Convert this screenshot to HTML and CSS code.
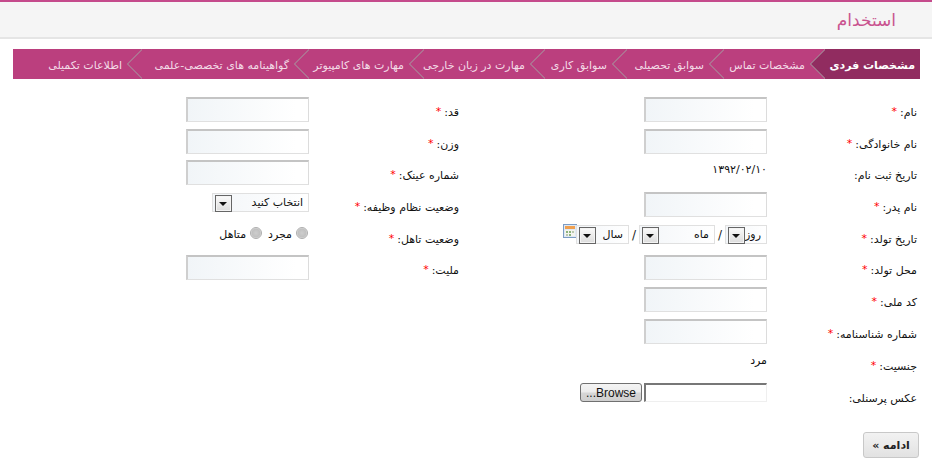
FILE: index.html
```html
<!DOCTYPE html>
<html lang="fa" dir="rtl">
<head>
<meta charset="utf-8">
<title>استخدام</title>
<link rel="stylesheet" href="styles.css">
</head>
<body>
<header class="top"><h1 class="title">استخدام</h1></header>
<nav class="tabs">
  <a class="tab active">مشخصات فردی<svg class="chev" viewBox="0 0 15 30"><path d="M15.5 0L.5 15L15.5 30"/></svg></a>
  <a class="tab">مشخصات تماس<svg class="chev" viewBox="0 0 15 30"><path d="M15.5 0L.5 15L15.5 30"/></svg></a>
  <a class="tab">سوابق تحصیلی<svg class="chev" viewBox="0 0 15 30"><path d="M15.5 0L.5 15L15.5 30"/></svg></a>
  <a class="tab">سوابق کاری<svg class="chev" viewBox="0 0 15 30"><path d="M15.5 0L.5 15L15.5 30"/></svg></a>
  <a class="tab">مهارت در زبان خارجی<svg class="chev" viewBox="0 0 15 30"><path d="M15.5 0L.5 15L15.5 30"/></svg></a>
  <a class="tab">مهارت های کامپیوتر<svg class="chev" viewBox="0 0 15 30"><path d="M15.5 0L.5 15L15.5 30"/></svg></a>
  <a class="tab">گواهینامه های تخصصی-علمی<svg class="chev" viewBox="0 0 15 30"><path d="M15.5 0L.5 15L15.5 30"/></svg></a>
  <a class="tab">اطلاعات تکمیلی</a>
</nav>
<form class="form">
  <label class="lbl">نام: <b>*</b></label>
  <div class="field"><input class="txt" type="text"></div>
  <label class="lbl">قد: <b>*</b></label>
  <div class="field"><input class="txt" type="text"></div>

  <label class="lbl">نام خانوادگی: <b>*</b></label>
  <div class="field"><input class="txt" type="text"></div>
  <label class="lbl">وزن: <b>*</b></label>
  <div class="field"><input class="txt" type="text"></div>

  <label class="lbl">تاریخ ثبت نام:</label>
  <div class="field value">۱۳۹۲/۰۲/۱۰</div>
  <label class="lbl">شماره عینک: <b>*</b></label>
  <div class="field"><input class="txt" type="text"></div>

  <label class="lbl">نام پدر: <b>*</b></label>
  <div class="field"><input class="txt" type="text"></div>
  <label class="lbl">وضعیت نظام وظیفه: <b>*</b></label>
  <div class="field"><span class="sel sel-wide"><select><option>انتخاب کنید</option></select></span></div>

  <label class="lbl">تاریخ تولد: <b>*</b></label>
  <div class="field date">
    <span class="sel sel-day"><select><option>روز</option></select></span><span class="slash">/</span>
    <span class="sel sel-month"><select><option>ماه</option></select></span><span class="slash">/</span>
    <span class="sel sel-year"><select><option>سال</option></select></span>
    <svg class="cal" viewBox="0 0 14 14"><rect x=".5" y=".5" width="13" height="13" fill="#dfe9f5" stroke="#7c9cc4"/><rect x="2" y="2" width="10" height="3" fill="#f0a050"/><rect x="2" y="6" width="10" height="6" fill="#f4f4ee"/><path d="M3 7h2v2H3zM6 7h2v2H6zM6 10h2v2H6z" fill="#8cb47c"/><path d="M9 7h2v2H9zM3 10h2v2H3z" fill="#b8c8b0"/></svg>
  </div>
  <label class="lbl">وضعیت تاهل: <b>*</b></label>
  <div class="field radios"><label class="radio"><input type="radio" name="m"><span>مجرد</span></label><label class="radio"><input type="radio" name="m"><span>متاهل</span></label></div>

  <label class="lbl">محل تولد: <b>*</b></label>
  <div class="field"><input class="txt" type="text"></div>
  <label class="lbl">ملیت: <b>*</b></label>
  <div class="field"><input class="txt" type="text"></div>

  <label class="lbl">کد ملی: <b>*</b></label>
  <div class="field wide"><input class="txt" type="text"></div>

  <label class="lbl">شماره شناسنامه: <b>*</b></label>
  <div class="field wide"><input class="txt" type="text"></div>

  <label class="lbl">جنسیت: <b>*</b></label>
  <div class="field wide value">مرد</div>

  <label class="lbl">عکس پرسنلی:</label>
  <div class="field wide file"><input class="path" type="text"><button class="browse" type="button">Browse...</button></div>
</form>
<div class="actions"><button class="next" type="button">ادامه »</button></div>
</body>
</html>
```
FILE: styles.css
```css
* { box-sizing: border-box; }
html, body { margin: 0; padding: 0; }
body {
  width: 932px;
  height: 468px;
  overflow: hidden;
  background: #fff;
  font-family: Tahoma, "DejaVu Sans", sans-serif;
  font-size: 11px;
  color: #111;
}
.top {
  height: 39px;
  background: #f5f5f5;
  border-top: 2px solid #c54b8c;
  border-bottom: 2px solid #e5e5e5;
  padding-right: 36px;
  display: flex;
  align-items: center;
}
.title {
  margin: 0;
  font-size: 17px;
  font-weight: normal;
  color: #c9538f;
}
.tabs {
  display: flex;
  height: 30px;
  margin: 10px 12px 0 13px;
  background: #bb3f7e;
  font-size: 11px;
}
.tab {
  position: relative;
  display: flex;
  flex: none;
  align-items: center;
  padding: 2px 20px 0 0;
  color: #f3dbe7;
  white-space: nowrap;
}
.tab:nth-child(1) { width: 95px; padding-right: 5px; }
.tab:nth-child(2) { width: 101px; }
.tab:nth-child(3) { width: 97px; }
.tab:nth-child(4) { width: 82px; }
.tab:nth-child(5) { width: 121px; }
.tab:nth-child(6) { width: 115px; }
.tab:nth-child(7) { width: 167px; }
.active {
  background: #912c60;
  color: #fff;
  font-weight: bold;
}
.chev {
  position: absolute;
  top: 0;
  left: -15px;
  width: 15px;
  height: 30px;
}
.chev path { fill: none; stroke: #a3a3a3; stroke-width: 1; }
.active .chev path { fill: #912c60; }
.form {
  display: grid;
  grid-template-columns: 150px 308px 150px 123px;
  grid-template-rows: 32px 31px 32px 32px 31px 32px 32px 32px 32px 32px;
  margin: 18px 15px 0 0;
}
.lbl {
  display: flex;
  align-items: center;
  gap: 3px;
  height: 25px;
  padding-top: 6px;
  white-space: nowrap;
}
.lbl b { color: #f00; font-weight: normal; font-size: 11px; margin-top: -3px; }
.field { display: flex; align-items: flex-start; }
.wide { grid-column: 2 / 5; }
.value { padding-top: 3px; }
.txt {
  width: 123px;
  height: 25px;
  margin: 0;
  border: 1px solid #e0e0e0;
  border-top: 2px solid #c4c4c4;
  border-right-color: #dcdcdc;
  border-left: 2px solid #cfcfcf;
  background: linear-gradient(to right, #f1f5f8, #fff 90%);
  outline: none;
}
.sel { position: relative; display: block; height: 19px; margin-top: 1px; }
.sel select {
  appearance: none;
  -webkit-appearance: none;
  display: block;
  width: 100%;
  height: 19px;
  margin: 0;
  padding: 0 5px 0 0;
  border: 1px solid #e0e0e0;
  border-radius: 0;
  background: linear-gradient(to right, #f3f6f9, #fff);
  font: inherit;
  color: #111;
}
.sel::after {
  content: "";
  position: absolute;
  top: 2px;
  left: 3px;
  width: 15px;
  height: 15px;
  border: 1px solid #666;
  background: linear-gradient(#fbfbfb, #dcdcdc);
  box-shadow: inset 0 0 0 1px #f4f4f4;
}
.sel::before {
  content: "";
  position: absolute;
  z-index: 1;
  top: 9px;
  left: 7px;
  border: 4px solid transparent;
  border-top-color: #111;
  border-bottom: 0;
}
.sel-wide { width: 97px; }
.sel-day { width: 42px; }
.sel-month { width: 76px; }
.sel-year { width: 53px; }
.slash { width: 10px; text-align: center; line-height: 22px; font-size: 12px; color: #222; }
.cal { width: 14px; height: 14px; margin-right: -1px; }
.radios { gap: 6px; padding: 3px 1px 0 0; }
.radio { display: flex; align-items: flex-start; gap: 4px; }
.radio span { padding-top: 1px; }
.radio input {
  appearance: none;
  -webkit-appearance: none;
  width: 12px;
  height: 12px;
  margin: 0;
  border: 1px solid #adadad;
  border-radius: 50%;
  background: radial-gradient(circle, #cdcdcd 0, #c0c0c0 58%, #f2f2f2 78%);
}
.file { gap: 2px; }
.path {
  width: 123px;
  height: 19px;
  margin: 0;
  border: 1px solid #efefef;
  border-top: 2px solid #777;
  border-left: 2px solid #777;
  background: #fff;
  outline: none;
}
.browse {
  width: 62px;
  height: 19px;
  margin: 0;
  padding: 0;
  border: 1px solid #707070;
  border-radius: 3px;
  background: linear-gradient(#f4f4f4 0, #ececec 45%, #d6d6d6 55%, #cfcfcf);
  font-family: "Liberation Sans", sans-serif;
  font-size: 12px;
  color: #111;
}
.actions { display: flex; margin: 17px 13px 0 0; }
.next {
  display: block;
  width: 56px;
  height: 26px;
  margin: 0;
  padding: 0;
  border: 1px solid #c8c8c8;
  border-radius: 3px;
  background: linear-gradient(#f2f2f2, #e2e2e2);
  font-family: inherit;
  font-size: 11px;
  font-weight: bold;
  color: #222;
}
```
